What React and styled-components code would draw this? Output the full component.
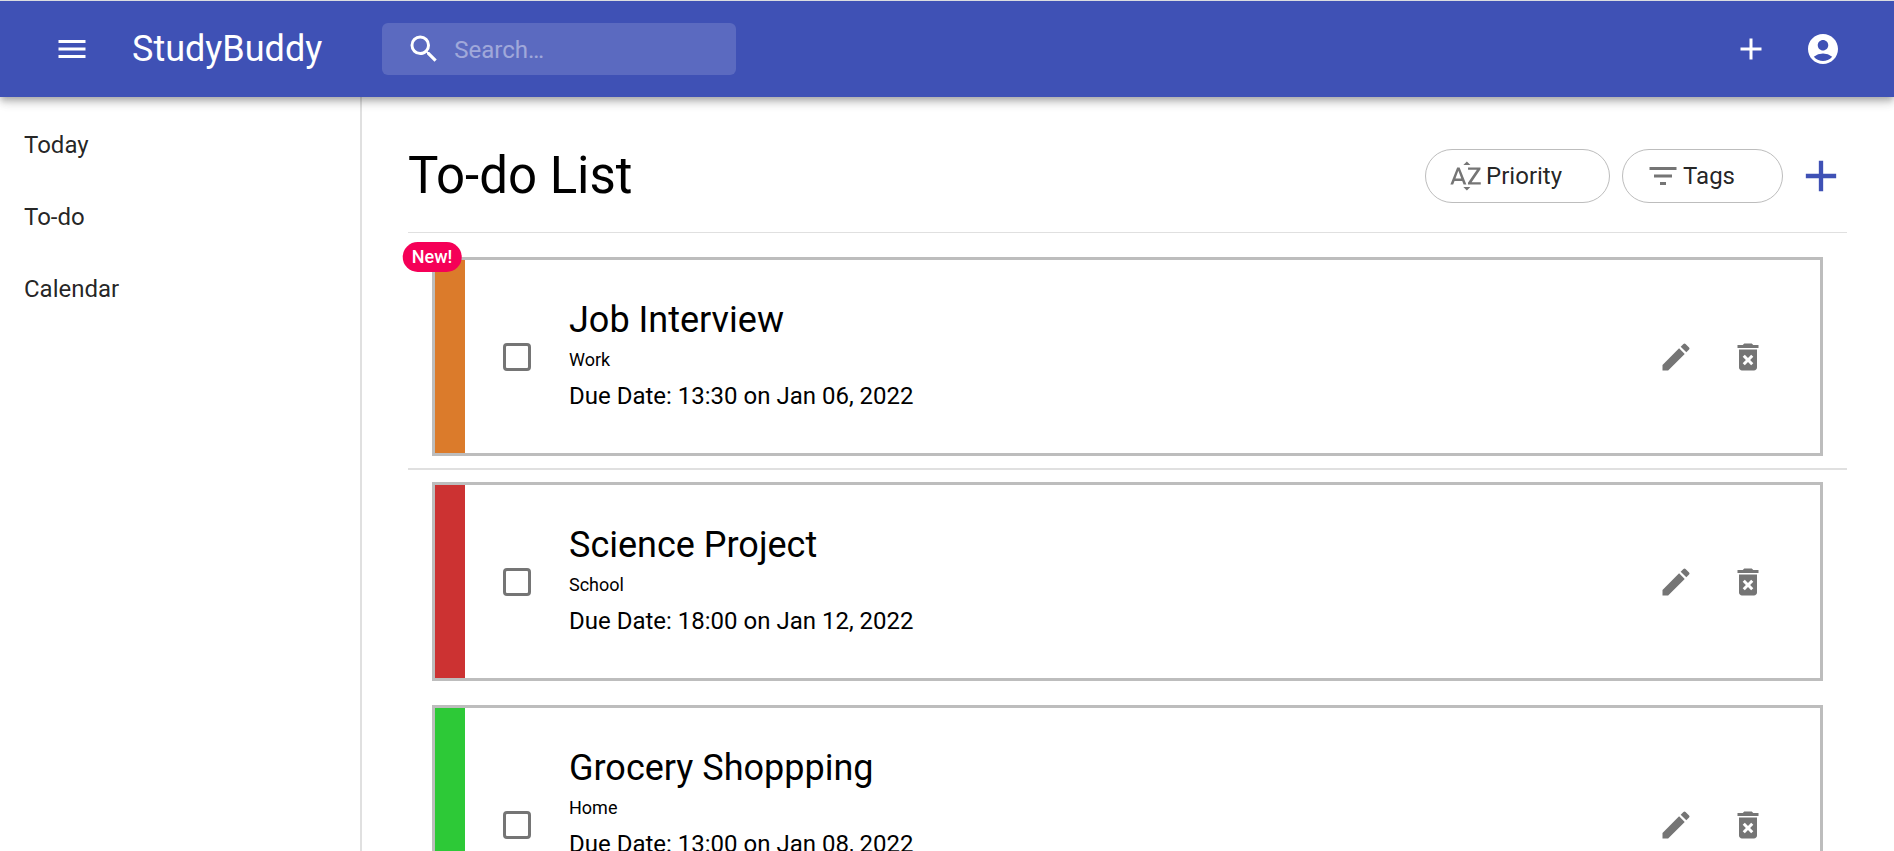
import React, { useState } from "react";
import styled, { createGlobalStyle } from "styled-components";
import {
  MdMenu,
  MdSearch,
  MdAdd,
  MdAccountCircle,
  MdSortByAlpha,
  MdFilterList,
  MdEdit,
  MdDeleteForever,
} from "react-icons/md";

const GlobalStyle = createGlobalStyle`
  *, *::before, *::after { box-sizing: border-box; }
  body {
    margin: 0;
    background: #fff;
    color: #000;
    font-family: Roboto, "Liberation Sans", sans-serif;
    font-size: 24px;
    line-height: 36px;
  }
  button, input { font: inherit; }
`;

const Page = styled.div`
  display: flex;
  flex-direction: column;
  height: 100vh;
  overflow: hidden;
`;

const TopBar = styled.header`
  position: relative;
  z-index: 1;
  display: flex;
  flex: none;
  align-items: center;
  padding: 0 35px 0 36px;
  height: 97px;
  border-top: 1px solid #dadce0;
  background: #3f51b5;
  color: #fff;
  box-shadow:
    0 3px 6px -1px rgba(0, 0, 0, 0.2),
    0 6px 8px rgba(0, 0, 0, 0.14),
    0 1px 15px rgba(0, 0, 0, 0.12);
`;

const IconButton = styled.button`
  display: flex;
  flex: none;
  align-items: center;
  justify-content: center;
  width: ${(p) => p.$box || 72}px;
  height: ${(p) => p.$box || 72}px;
  padding: 0;
  border: 0;
  border-radius: 50%;
  background: none;
  color: ${(p) => p.$color || "inherit"};
  cursor: pointer;

  &:hover { background: rgba(0, 0, 0, 0.04); }
`;

const Brand = styled.a`
  margin: 0 60px 0 24px;
  color: inherit;
  font-size: 36px;
  line-height: 48px;
  text-decoration: none;
`;

const SearchBox = styled.label`
  display: flex;
  align-items: center;
  gap: 12px;
  width: 354px;
  height: 52px;
  padding: 0 12px 0 24px;
  border-radius: 6px;
  background: rgba(255, 255, 255, 0.15);
`;

const SearchInput = styled.input`
  flex: 1;
  min-width: 0;
  padding: 2px 0 0;
  border: 0;
  outline: 0;
  background: none;
  color: #fff;

  &::placeholder { color: #fff; opacity: 0.42; }
`;

const TopActions = styled.div`
  display: flex;
  margin-left: auto;
`;

const Body = styled.div`
  display: flex;
  flex: 1;
  min-height: 0;
`;

const Sidebar = styled.nav`
  display: flex;
  flex: none;
  flex-direction: column;
  width: 362px;
  padding-top: 12px;
  border-right: 2px solid #e0e0e0;
`;

const NavLink = styled.a`
  padding: 18px 24px;
  color: rgba(0, 0, 0, 0.87);
  text-decoration: none;

  &:hover { background: rgba(0, 0, 0, 0.04); }
`;

const Main = styled.main`
  flex: 1;
  min-width: 0;
  padding: 47px 47px 0 46px;
  overflow-y: auto;
  scrollbar-width: none;
`;

const Heading = styled.div`
  display: flex;
  align-items: center;
  gap: 12px;
  padding-bottom: 24px;
  border-bottom: 1px solid #e0e0e0;
`;

const Title = styled.h1`
  flex: 1;
  margin: 0;
  font-size: 51px;
  font-weight: 400;
  line-height: 64px;
`;

const Chip = styled.button`
  display: flex;
  align-items: center;
  gap: 2px;
  height: 54px;
  padding: 0 47px 0 22px;
  border: 1px solid #bdbdbd;
  border-radius: 27px;
  background: none;
  color: rgba(0, 0, 0, 0.87);
  cursor: pointer;

  svg { color: #757575; }
`;

const TaskList = styled.ul`
  margin: 0;
  padding: 12px 0;
  list-style: none;
`;

const TaskItem = styled.li`
  padding: 12px 24px;

  &:first-child { border-bottom: 2px solid #e0e0e0; }
`;

const Card = styled.article`
  position: relative;
  display: flex;
  min-height: ${(p) => (p.$tall ? 240 : 199)}px;
  border: 3px solid #bdbdbd;
`;

const Badge = styled.span`
  position: absolute;
  top: -3px;
  left: -3px;
  padding: 0 9px;
  border-radius: 15px;
  background: #f50057;
  color: #fff;
  font-size: 18px;
  font-weight: 500;
  line-height: 30px;
  transform: translate(-50%, -50%);
`;

const Stripe = styled.div`
  flex: none;
  width: 30px;
  background: ${(p) => p.$color};
`;

const Checkbox = styled.input`
  flex: none;
  align-self: center;
  appearance: none;
  width: 28px;
  height: 28px;
  margin: 0 38px;
  border: 3px solid #757575;
  border-radius: 4px;
  cursor: pointer;

  &:checked { background: #757575; }
`;

const Details = styled.div`
  flex: 1;
  min-width: 0;
  padding: 36px 0;
`;

const TaskName = styled.h2`
  margin: 0;
  font-size: 36px;
  font-weight: 400;
  line-height: 48px;
`;

const TaskTag = styled.p`
  margin: 0 0 2px;
  font-size: 18px;
  line-height: 32px;
`;

const DueDate = styled.p`
  margin: 0;
`;

const CardActions = styled.div`
  display: flex;
  align-items: center;
  margin-right: 36px;
`;

const tasks = [
  { name: "Job Interview", tag: "Work", due: "13:30 on Jan 06, 2022", color: "#db7b2b", isNew: true },
  { name: "Science Project", tag: "School", due: "18:00 on Jan 12, 2022", color: "#cc3232" },
  { name: "Grocery Shoppping", tag: "Home", due: "13:00 on Jan 08, 2022", color: "#2dc937", tall: true },
];

function Task({ task }) {
  const [done, setDone] = useState(false);
  return (
    <TaskItem>
      <Card $tall={task.tall}>
        <Stripe $color={task.color} />
        <Checkbox
          type="checkbox"
          checked={done}
          onChange={(e) => setDone(e.target.checked)}
          aria-label={task.name}
        />
        <Details>
          <TaskName>{task.name}</TaskName>
          <TaskTag>{task.tag}</TaskTag>
          <DueDate>Due Date: {task.due}</DueDate>
        </Details>
        <CardActions>
          <IconButton $color="#757575" aria-label="Edit"><MdEdit size={36} /></IconButton>
          <IconButton $color="#757575" aria-label="Delete"><MdDeleteForever size={36} /></IconButton>
        </CardActions>
        {task.isNew && <Badge>New!</Badge>}
      </Card>
    </TaskItem>
  );
}

export default function App() {
  return (
    <Page>
      <GlobalStyle />
      <TopBar>
        <IconButton aria-label="Menu"><MdMenu size={36} /></IconButton>
        <Brand href="#">StudyBuddy</Brand>
        <SearchBox>
          <MdSearch size={36} />
          <SearchInput type="text" placeholder="Search…" aria-label="Search" />
        </SearchBox>
        <TopActions>
          <IconButton aria-label="Add"><MdAdd size={36} /></IconButton>
          <IconButton aria-label="Account"><MdAccountCircle size={36} /></IconButton>
        </TopActions>
      </TopBar>
      <Body>
        <Sidebar>
          <NavLink href="#today">Today</NavLink>
          <NavLink href="#todo">To-do</NavLink>
          <NavLink href="#calendar">Calendar</NavLink>
        </Sidebar>
        <Main>
          <Heading>
            <Title>To-do List</Title>
            <Chip><MdSortByAlpha size={36} />Priority</Chip>
            <Chip><MdFilterList size={36} />Tags</Chip>
            <IconButton $box={52} $color="#3f51b5" aria-label="Add task"><MdAdd size={52} /></IconButton>
          </Heading>
          <TaskList>
            {tasks.map((task) => <Task key={task.name} task={task} />)}
          </TaskList>
        </Main>
      </Body>
    </Page>
  );
}
